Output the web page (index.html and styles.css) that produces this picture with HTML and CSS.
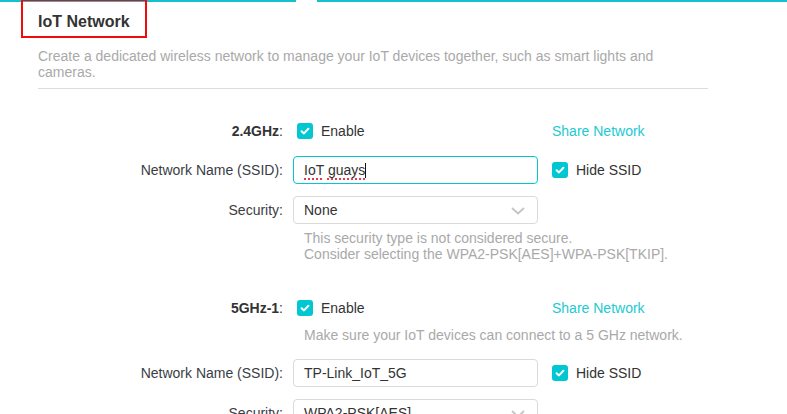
FILE: index.html
```html
<!DOCTYPE html>
<html lang="en">
<head>
<meta charset="utf-8">
<title>IoT Network</title>
<link rel="stylesheet" href="styles.css">
</head>
<body>
<div class="topline"><div class="seg seg-left"></div><div class="seg seg-right"></div></div>
<div class="highlight"></div>
<main class="panel">
  <h1 class="title">IoT Network</h1>
  <p class="desc">Create a dedicated wireless network to manage your IoT devices together, such as smart lights and cameras.</p>
  <div class="divider"></div>

  <section class="band band-24">
    <div class="row">
      <div class="label"><b>2.4GHz</b>:</div>
      <div class="control check-line"><span class="cb"><svg viewBox="0 0 16 16" width="16" height="16"><path d="M4.6 8.2 L7 10.4 L11.4 5.8" fill="none" stroke="#fff" stroke-width="2" stroke-linecap="round" stroke-linejoin="round"/></svg></span><span class="cb-text">Enable</span></div>
      <div class="extra"><span class="link">Share Network</span></div>
    </div>
    <div class="row gap11">
      <div class="label">Network Name (SSID):</div>
      <div class="control"><div class="field focused"><span class="sp">IoT</span> <span class="sp">guays</span><span class="caret"></span></div></div>
      <div class="extra check-line"><span class="cb"><svg viewBox="0 0 16 16" width="16" height="16"><path d="M4.6 8.2 L7 10.4 L11.4 5.8" fill="none" stroke="#fff" stroke-width="2" stroke-linecap="round" stroke-linejoin="round"/></svg></span><span class="cb-text">Hide SSID</span></div>
    </div>
    <div class="row gap12">
      <div class="label">Security:</div>
      <div class="control"><div class="field select">None<svg class="chev" viewBox="0 0 14 8" width="14" height="8"><path d="M1 1 L7 6.5 L13 1" fill="none" stroke="#c4c4c4" stroke-width="1.8"/></svg></div></div>
    </div>
    <div class="hint h1">This security type is not considered secure.<br>Consider selecting the WPA2-PSK[AES]+WPA-PSK[TKIP].</div>
  </section>

  <section class="band band-5">
    <div class="row">
      <div class="label"><b>5GHz-1</b>:</div>
      <div class="control check-line"><span class="cb"><svg viewBox="0 0 16 16" width="16" height="16"><path d="M4.6 8.2 L7 10.4 L11.4 5.8" fill="none" stroke="#fff" stroke-width="2" stroke-linecap="round" stroke-linejoin="round"/></svg></span><span class="cb-text">Enable</span></div>
      <div class="extra"><span class="link">Share Network</span></div>
    </div>
    <div class="hint h2">Make sure your IoT devices can connect to a 5 GHz network.</div>
    <div class="row gap16">
      <div class="label">Network Name (SSID):</div>
      <div class="control"><div class="field">TP-Link_IoT_5G</div></div>
      <div class="extra check-line"><span class="cb"><svg viewBox="0 0 16 16" width="16" height="16"><path d="M4.6 8.2 L7 10.4 L11.4 5.8" fill="none" stroke="#fff" stroke-width="2" stroke-linecap="round" stroke-linejoin="round"/></svg></span><span class="cb-text">Hide SSID</span></div>
    </div>
    <div class="row gap12">
      <div class="label">Security:</div>
      <div class="control"><div class="field select">WPA2-PSK[AES]<svg class="chev" viewBox="0 0 14 8" width="14" height="8"><path d="M1 1 L7 6.5 L13 1" fill="none" stroke="#c4c4c4" stroke-width="1.8"/></svg></div></div>
    </div>
  </section>
</main>
</body>
</html>
```

FILE: styles.css
```css
html, body {
  margin: 0;
  padding: 0;
  background: #fff;
  overflow: hidden;
}
body {
  font-family: "Liberation Sans", Arial, sans-serif;
  font-size: 14px;
  color: #333;
  position: relative;
  height: 414px;
}
.topline {
  display: flex;
  height: 2px;
}
.seg { background: #14c1cc; height: 2px; }
.seg-left { width: 296px; }
.seg-right { flex: 1; margin-left: 21px; }

.highlight {
  position: absolute;
  left: 21px;
  top: -1px;
  width: 122px;
  height: 35px;
  border: 2px solid #f20a0a;
}

.panel {
  padding: 10px 0 0 38px;
  width: 670px;
}
.title {
  margin: 0;
  font-size: 16px;
  font-weight: bold;
  line-height: 20px;
  color: #333;
}
.desc {
  margin: 16px 0 0;
  line-height: 16px;
  color: #a9a9a9;
  width: 640px;
}
.divider {
  margin-top: 8px;
  height: 1px;
  background: #dcdcdc;
}

.band-24 { margin-top: 28px; }
.band-5 { margin-top: 32px; }

.row {
  display: flex;
  align-items: center;
  height: 28px;
}
.gap11 { margin-top: 11px; }
.gap12 { margin-top: 12px; }
.gap16 { margin-top: 16px; }

.label {
  width: 255px;
  box-sizing: border-box;
  padding-right: 10px;
  text-align: right;
  line-height: 28px;
  color: #3a3d44;
}
.label b { color: #333; }
.control {
  width: 245px;
  height: 28px;
}
.extra {
  margin-left: 14px;
  line-height: 28px;
}
.check-line {
  display: flex;
  align-items: center;
}
.control.check-line { padding-left: 4px; box-sizing: border-box; }
.cb {
  width: 16px;
  height: 16px;
  border-radius: 3px;
  background: #00c7d1;
  display: inline-flex;
}
.cb svg { display: block; }
.cb-text {
  margin-left: 8px;
  color: #333;
}
.link {
  color: #22c9d3;
}

.field {
  position: relative;
  box-sizing: border-box;
  height: 28px;
  border: 1px solid #dadada;
  border-radius: 4px;
  padding: 0 10px;
  line-height: 26px;
  color: #333;
  white-space: nowrap;
}
.field.focused {
  border-color: #00c7d1;
}
.sp {
  text-decoration: underline dotted #e33a4f;
  text-decoration-thickness: 2px;
  text-underline-offset: 3px;
}
.caret {
  display: inline-block;
  width: 1px;
  height: 15px;
  background: #111;
  vertical-align: -3px;
}
.chev {
  position: absolute;
  right: 12px;
  top: 10px;
}

.hint {
  padding-left: 266px;
  line-height: 16px;
  color: #a9a9a9;
}
.h1 { margin-top: 6px; }
.h2 { margin-top: 5px; }
```
